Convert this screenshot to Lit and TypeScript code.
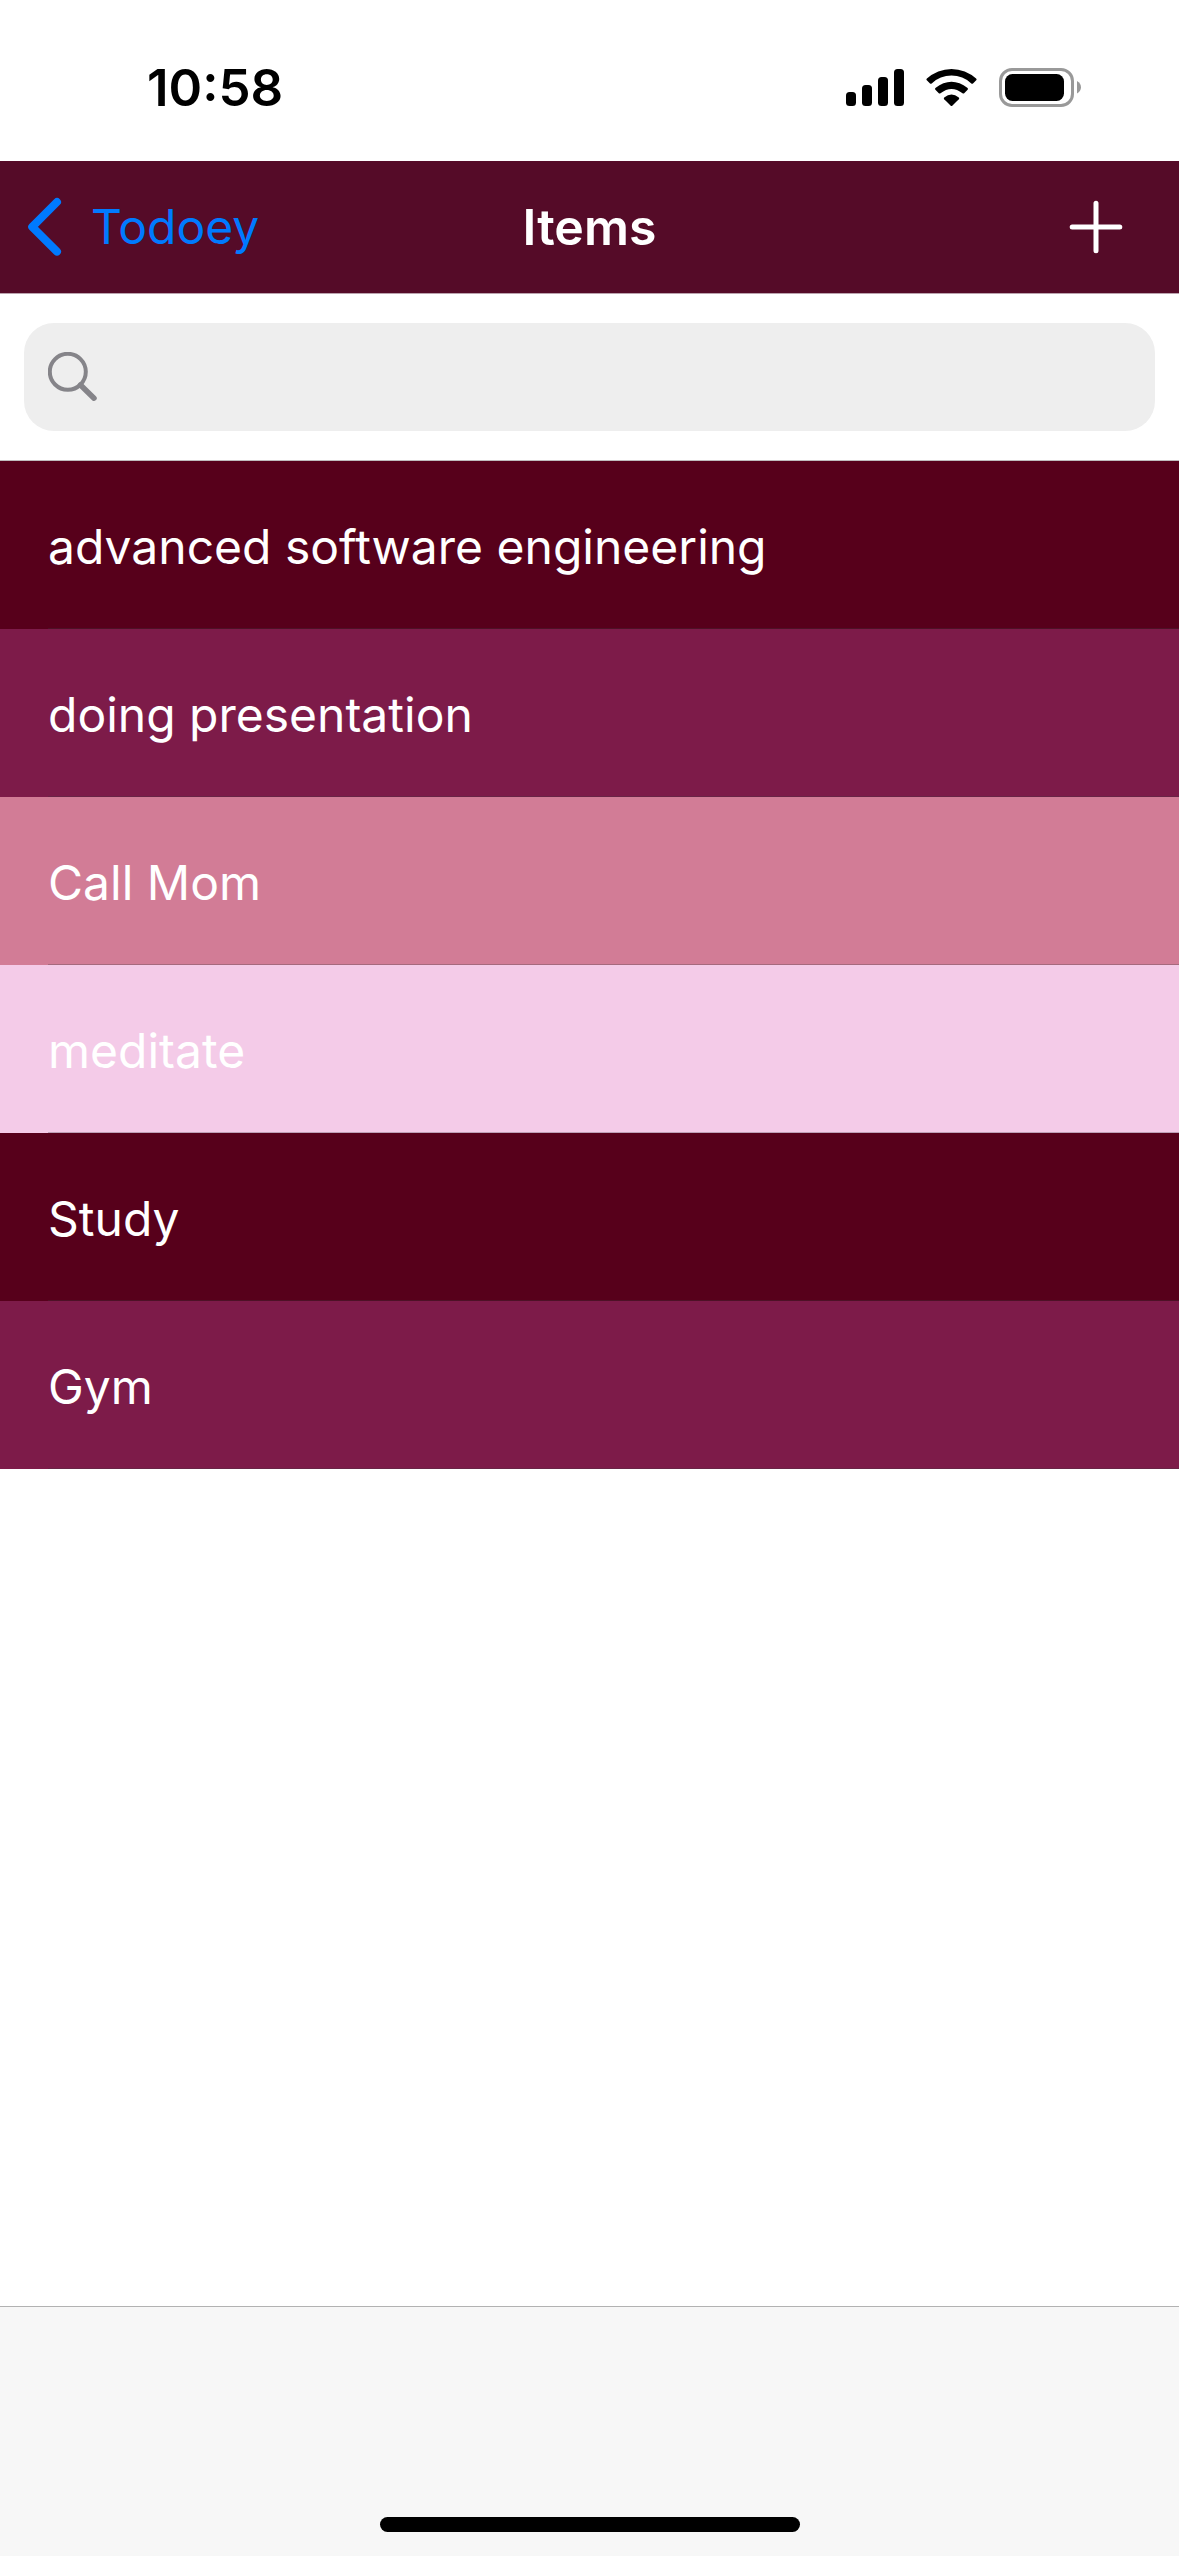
import { LitElement, html, css } from "lit";
import { customElement, property, state } from "lit/decorators.js";
import { styleMap } from "lit/directives/style-map.js";

interface TodoItem {
  title: string;
  color: string;
}

@customElement("status-bar")
export class StatusBar extends LitElement {
  static styles = css`
    :host {
      display: flex;
      align-items: center;
      justify-content: space-between;
      box-sizing: border-box;
      height: 161px;
      padding: 14px 97px 0 147px;
      background: #fff;
      color: #000;
    }
    .time {
      font-size: 51px;
      line-height: 60px;
      font-weight: 600;
    }
    .indicators {
      display: flex;
      align-items: center;
      gap: 22px;
    }
    svg {
      display: block;
    }
  `;

  render() {
    return html`
      <time class="time">10:58</time>
      <div class="indicators">
        <svg width="58" height="39" viewBox="0 0 58 39" role="img" aria-label="Signal">
          <rect x="0" y="24" width="10" height="14" rx="3.5" />
          <rect x="16" y="17" width="10" height="21" rx="3.5" />
          <rect x="32" y="9" width="10" height="29" rx="3.5" />
          <rect x="48" y="1" width="10" height="37" rx="3.5" />
        </svg>
        <svg width="51" height="39" viewBox="0 0 51 39" role="img" aria-label="Wi-Fi">
          <path d="M.9 10.6A36 36 0 0 1 50.1 10.6Q51 11.4 50.2 12.2L47 15.4Q46.2 16.2 45.3 15.4A29 29 0 0 0 5.7 15.4Q4.8 16.2 4 15.4L.8 12.2Q0 11.4 .9 10.6Z" />
          <path d="M9.4 20Q25.5 7.4 41.6 20Q42.4 20.9 41.6 21.8L38.2 25.2Q37.4 26 36.5 25.2Q25.5 16.6 14.5 25.2Q13.6 26 12.8 25.2L9.4 21.8Q8.6 20.9 9.4 20Z" />
          <path d="M18.2 29.4Q25.5 23.4 32.8 29.4Q33.7 30.3 32.8 31.2L26.5 37.5Q25.5 38.5 24.5 37.5L18.2 31.2Q17.3 30.3 18.2 29.4Z" />
        </svg>
        <svg width="83" height="39" viewBox="0 0 83 39" role="img" aria-label="Battery">
          <rect x="1.5" y="1.5" width="72" height="36" rx="11.5" fill="none" stroke="#999" stroke-width="3" />
          <rect x="6" y="6" width="59" height="27" rx="7.5" />
          <path d="M78 13Q82 15.5 82 19.3T78 25.6Z" fill="#999" />
        </svg>
      </div>
    `;
  }
}

@customElement("nav-bar")
export class NavBar extends LitElement {
  static styles = css`
    :host {
      display: grid;
      grid-template-columns: 1fr auto 1fr;
      align-items: center;
      box-sizing: border-box;
      height: 133px;
      padding: 0 26px;
      background: #550b28;
      border-bottom: 1px solid #bba3ae;
      font-size: 48px;
      line-height: 60px;
    }
    .back {
      display: flex;
      align-items: center;
      gap: 27px;
      justify-self: start;
      color: #007aff;
      text-decoration: none;
    }
    .title {
      margin: 0;
      font-size: 50px;
      font-weight: 600;
      color: #fff;
    }
    .add {
      display: flex;
      justify-self: end;
      padding: 0 28px;
      border: 0;
      background: none;
      color: #fff;
    }
    svg {
      display: block;
    }
  `;

  @property() heading = "";
  @property() parent = "";

  render() {
    return html`
      <a class="back" href="#lists">
        <svg width="38" height="60" viewBox="0 0 38 60" fill="none" stroke="currentColor" stroke-width="8" stroke-linecap="round" stroke-linejoin="round" aria-hidden="true">
          <path d="M31 5 6.2 29.8 31 54.6" />
        </svg>
        ${this.parent}
      </a>
      <h1 class="title">${this.heading}</h1>
      <button class="add" type="button" aria-label="Add">
        <svg width="58" height="58" viewBox="0 0 58 58" fill="none" stroke="currentColor" stroke-width="5" stroke-linecap="round" aria-hidden="true">
          <path d="M29 5.2V52.8M5.2 29H52.8" />
        </svg>
      </button>
    `;
  }
}

@customElement("search-bar")
export class SearchBar extends LitElement {
  static styles = css`
    :host {
      display: block;
      padding: 29px 24px;
      background: #fff;
      border-bottom: 1px solid #c0bcbe;
    }
    .field {
      display: flex;
      align-items: center;
      gap: 16px;
      height: 108px;
      padding: 0 24px;
      box-sizing: border-box;
      border-radius: 30px;
      background: #eee;
      color: #858489;
    }
    .icon {
      display: block;
      flex: none;
    }
    .input {
      flex: 1;
      min-width: 0;
      padding: 0;
      border: 0;
      outline: 0;
      background: none;
      font: inherit;
      font-size: 48px;
      color: #000;
    }
  `;

  render() {
    return html`
      <label class="field">
        <svg class="icon" width="50" height="50" viewBox="0 0 50 50" fill="none" stroke="currentColor" aria-hidden="true">
          <circle cx="19.8" cy="19.8" r="18" stroke-width="4" />
          <path d="M32.5 33 46 46.2" stroke-width="5.5" stroke-linecap="round" />
        </svg>
        <input class="input" type="text" aria-label="Search" />
      </label>
    `;
  }
}

@customElement("todo-list")
export class TodoList extends LitElement {
  static styles = css`
    :host {
      display: block;
    }
    .list {
      margin: 0;
      padding: 0;
      list-style: none;
    }
    .row {
      display: flex;
      flex-direction: column;
      height: 168px;
      padding-left: 48px;
      color: #fff;
      font-size: 48px;
      line-height: 60px;
    }
    .label {
      display: flex;
      flex: 1;
      align-items: center;
      padding-top: 4px;
      border-bottom: 1px solid rgba(60, 60, 67, 0.29);
    }
  `;

  @property({ attribute: false }) items: TodoItem[] = [];

  render() {
    return html`
      <ul class="list">
        ${this.items.map(
          (item) => html`
            <li class="row" style=${styleMap({ backgroundColor: item.color })}>
              <span class="label">${item.title}</span>
            </li>
          `
        )}
      </ul>
    `;
  }
}

@customElement("app-root")
export class AppRoot extends LitElement {
  static styles = css`
    :host {
      display: flex;
      flex-direction: column;
      min-height: 100vh;
      background: #fff;
      font-family: Inter, "Liberation Sans", sans-serif;
    }
    .content {
      flex: 1;
    }
    .toolbar {
      display: flex;
      align-items: flex-end;
      justify-content: center;
      box-sizing: border-box;
      height: 250px;
      padding-bottom: 24px;
      border-top: 1px solid #b2b2b2;
      background: #f7f7f7;
    }
    .home {
      width: 420px;
      height: 15px;
      border-radius: 8px;
      background: #000;
    }
  `;

  @state() private items: TodoItem[] = [
    { title: "advanced software engineering", color: "#57001b" },
    { title: "doing presentation", color: "#7d1b49" },
    { title: "Call Mom", color: "#d27c96" },
    { title: "meditate", color: "#f4cbe8" },
    { title: "Study", color: "#57001b" },
    { title: "Gym", color: "#7d1b49" },
  ];

  render() {
    return html`
      <status-bar></status-bar>
      <nav-bar heading="Items" parent="Todoey"></nav-bar>
      <search-bar></search-bar>
      <main class="content">
        <todo-list .items=${this.items}></todo-list>
      </main>
      <footer class="toolbar"><div class="home"></div></footer>
    `;
  }
}
